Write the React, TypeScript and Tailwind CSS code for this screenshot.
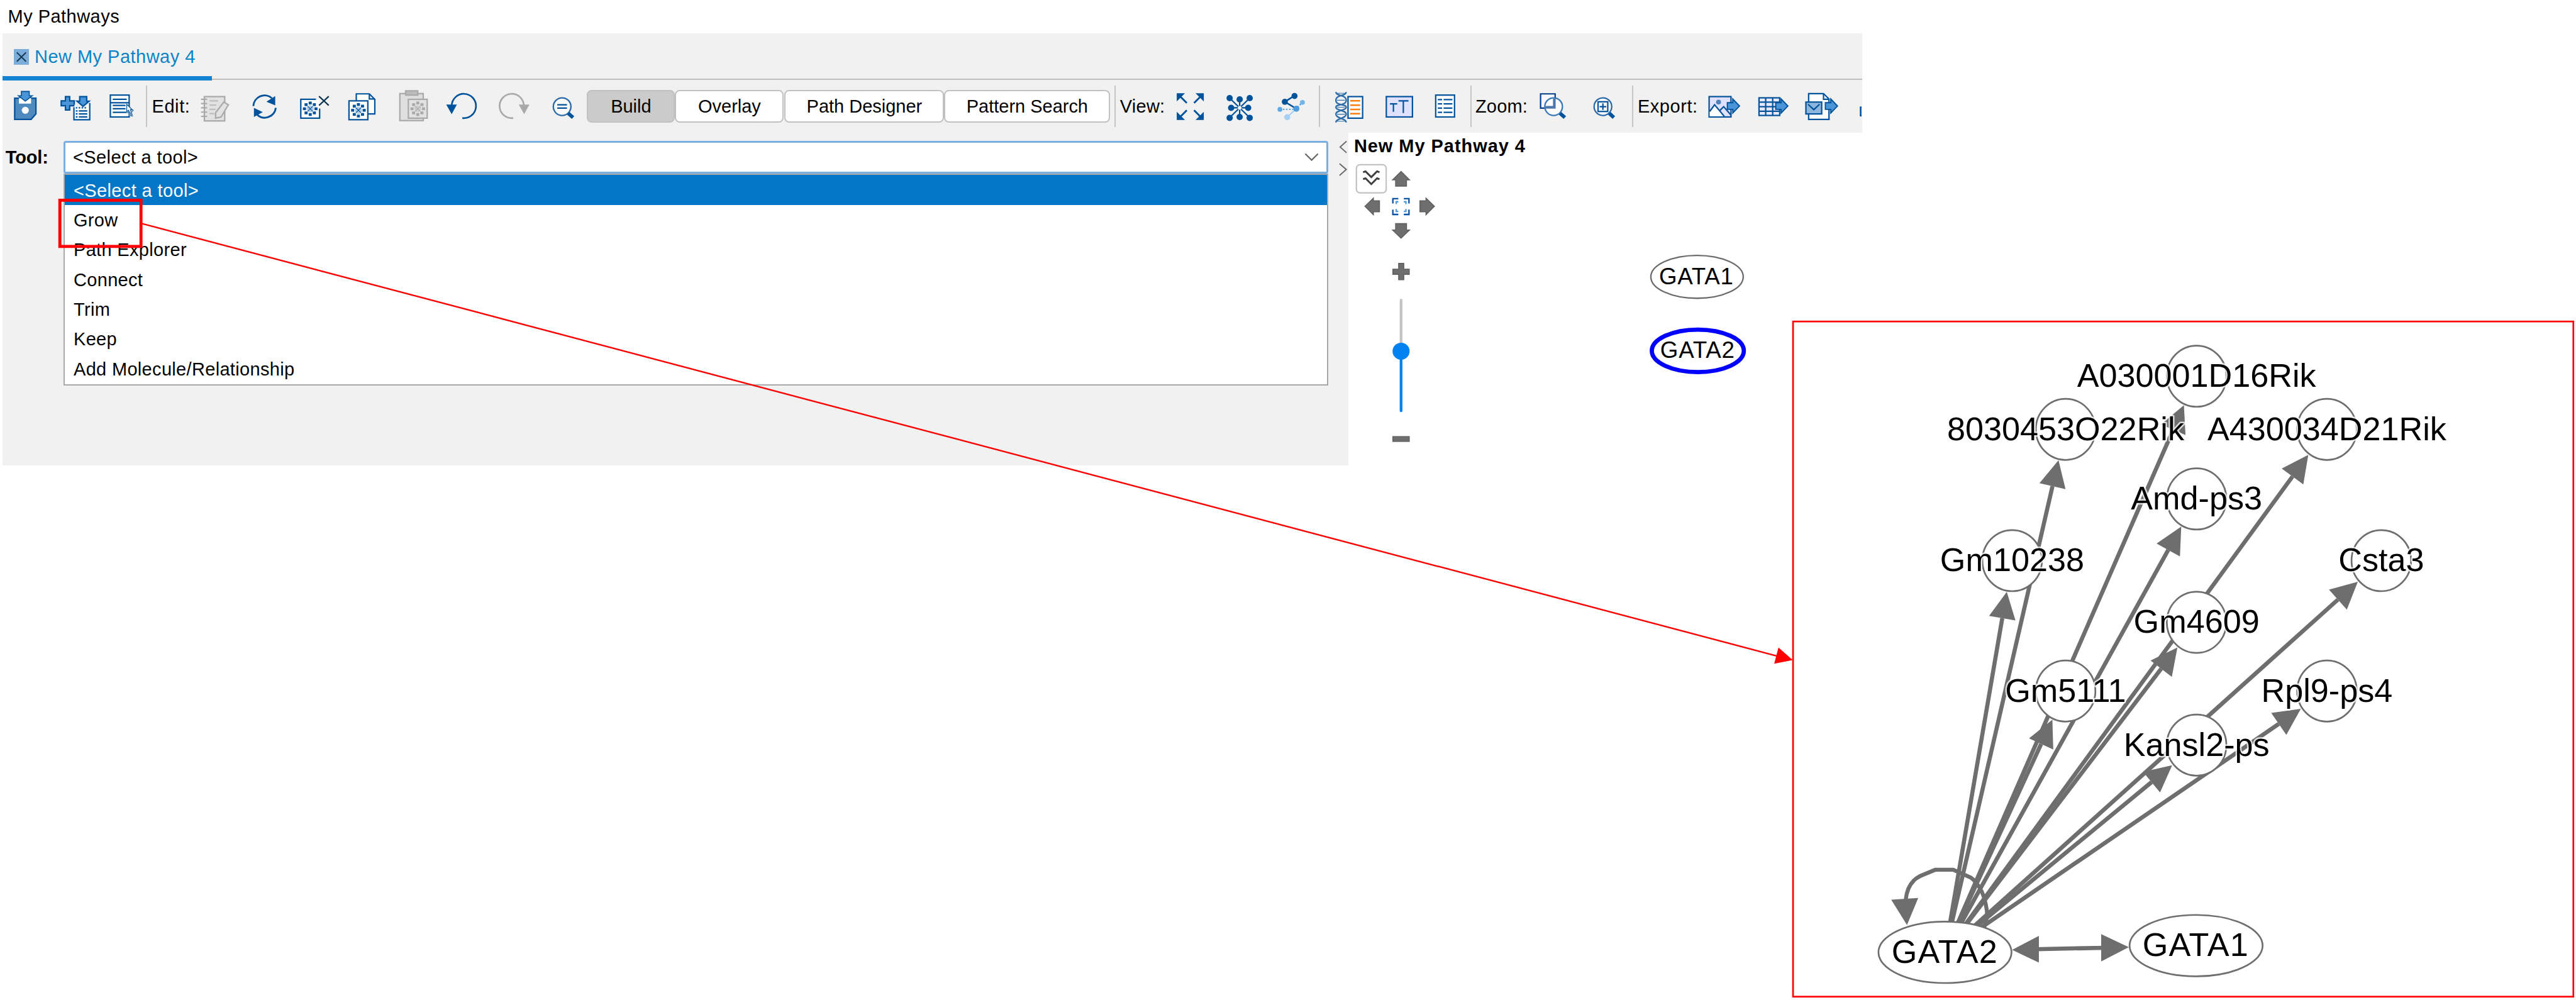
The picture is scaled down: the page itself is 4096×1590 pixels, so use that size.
import React from "react";

const NAVY = "#00529b";
const BLUE = "#4a95d8";
const EDGE = "#6e6e6e";

/* Toolbar cell: a slice of the bar starting at x, w wide, drawn in bar coordinates. */
function Cell({ x, w, children }: { x: number; w: number; children: React.ReactNode }) {
  return (
    <svg
      className="block shrink-0"
      width={w}
      height={86}
      viewBox={`${x} 132 ${w} 86`}
      fill="none"
      stroke={NAVY}
      strokeWidth={2.3}
    >
      {children}
    </svg>
  );
}

function Separator() {
  return <div className="h-[68px] w-[2px] shrink-0 bg-[#c6c6c6]" />;
}

function Dots({ cx, cy, color, core }: { cx: number; cy: number; color: string; core: string }) {
  const pts = [
    [0, -9.5], [0, 9.5], [-9.5, 0], [9.5, 0],
    [-6.8, -6.8], [6.8, -6.8], [-6.8, 6.8], [6.8, 6.8],
  ];
  return (
    <g stroke="none">
      <circle cx={cx} cy={cy} r={6} fill={core} />
      <path d={`M${cx - 4} ${cy - 4}l8 8M${cx + 4} ${cy - 4}l-8 8`} stroke={color} strokeWidth={1.2} />
      {pts.map(([dx, dy], i) => (
        <rect key={i} x={cx + dx - 2.5} y={cy + dy - 2.3} width={5} height={4.6} fill={color} />
      ))}
    </g>
  );
}

function ExportArrow({ x }: { x: number }) {
  return (
    <path d={`M${x} 168.5h9v-6l11 11.5l-11 11.5v-6h-9z`} fill={BLUE} strokeWidth={2} />
  );
}

function ToolButton({ label, className }: { label: string; className: string }) {
  return (
    <button
      className={
        "flex h-[54px] shrink-0 items-center justify-center rounded-[8px] border-3 border-[#c1c1c1] whitespace-nowrap " +
        className
      }
    >
      {label}
    </button>
  );
}

function Toolbar() {
  return (
    <div className="flex h-[86px] w-[3060px] items-center overflow-hidden bg-[#f1f1f1]">
      <Cell x={4} w={76}>
        <path d="M24 161H59V187L51 196H24Z" fill="#4f8abf" />
        <path d="M31 161V170H51V161Z" fill="#fff" stroke="none" />
        <path d="M35 150H48V157H53L41.5 166L30 157H35Z" fill={BLUE} strokeWidth={1.6} />
        <circle cx={41.5} cy={181} r={5.8} fill="#fff" stroke="none" />
      </Cell>
      <Cell x={80} w={85}>
        <path d="M108 158.500H115V165.500H122.500V173.500H115V180.500H108V173.500H101V165.500H108Z" fill={BLUE} />
        <path d="M123 171L121.700 196.500H148V169L141 176H127Z" fill="#fff" stroke="none" />
        <path d="M122 176V196.500H148V169" />
        <path d="M131.500 158.500H143V166H147L137 174.500L127 166H131.500Z" fill={BLUE} />
        <path d="M125 177H143" strokeDasharray="2.500 2.300" />
        <path d="M125 182H128M130 182H144M125 187H128M130 187H144M125 192H128M130 192H144" />
      </Cell>
      <Cell x={165} w={75}>
        <rect x={182} y={156} width={31} height={36} fill="#fff" />
        <path d="M186 163H209M182 168.500H213M186 173H207M186 178.500H207M186 184.500H209" />
        <path d="M209 171L209 183L212 181L216 190L218 189L215 180H218Z" fill="#fff" strokeWidth={1.3} />
        <path d="M209 183L219 191M220 180L212 190" stroke="#5d8fbd" />
      </Cell>
      <Separator />
      <div className="w-[78px] shrink-0 pl-[8px] tracking-[0.600px] whitespace-nowrap">Edit:</div>
      <Cell x={320} w={76}>
        <g stroke="#a9a9a9">
          <rect x={336.500} y={158.500} width={33.500} height={40} fill="#e2e2e2" />
          <path d="M331 163H341M331 170H341M331 177H341M331 184H341M331 191H341" />
          <path d="M345 165.500H359M345 172.500H356M345 179.500H355M345 186.500H353" strokeWidth={2.200} stroke="#bdbdbd" />
          <path d="M368.500 167.500L376 172L364 192L355 194V185Z" fill="#e2e2e2" />
        </g>
      </Cell>
      <Cell x={396} w={78}>
        <path d="M416.500 174A18.500 18.500 0 0 1 447 161" strokeWidth={3} />
        <path d="M453.500 177A18.500 18.500 0 0 1 423 188.500" strokeWidth={3} />
        <path d="M452.500 157.500V173L438 167Z M417.500 192V177L432 184Z" fill={NAVY} stroke="none" />
      </Cell>
      <Cell x={474} w={83}>
        <path d="M495 163H526V194H495Z" fill="#fff" stroke="none" />
        <path d="M520 163H495V194H526V178" />
        <Dots cx={510.500} cy={178.500} color={NAVY} core="#b4cde6" />
        <path d="M525 158L541 173M541 158L525 173" stroke="#0b3450" />
      </Cell>
      <Cell x={557} w={80}>
        <path d="M586.500 165V154H608L617 163V187H605" fill="#fff" />
        <path d="M608 154V162.500H617" />
        <rect x={574.500} y={165.500} width={31} height={31} fill="#fff" />
        <Dots cx={590} cy={181} color={NAVY} core="#b4cde6" />
      </Cell>
      <Cell x={637} w={83}>
        <g stroke="#a9a9a9">
          <rect x={658.500} y={153.500} width={38.500} height={44.500} fill="#dedede" />
          <rect x={668} y={149} width={20} height={7} fill="#bcbcbc" />
          <rect x={672.500} y={163} width={31} height={31} fill="#e2e2e2" />
          <Dots cx={688} cy={178.500} color="#a9a9a9" core="#cfcfcf" />
        </g>
      </Cell>
      <Cell x={720} w={83}>
        <path d="M743 174A20 20 0 1 1 760.500 193.800" strokeWidth={2.800} />
        <path d="M734 171.500H751.500L743 187.500Z" fill={NAVY} stroke="none" />
      </Cell>
      <Cell x={803} w={87}>
        <path d="M862 174A20 20 0 1 0 844.500 193.800" strokeWidth={2.800} stroke="#a9a9a9" />
        <path d="M853.500 171.500H871L862.500 187.500Z" fill="#a9a9a9" stroke="none" />
      </Cell>
      <Cell x={890} w={76}>
        <circle cx={925} cy={175} r={14.500} fill="#fff" fillOpacity={0.6} stroke="#2a6aa8" strokeWidth={2.400} />
        <path d="M917 172H933M917 177.500H933" />
        <path d="M935 186L943 193" strokeWidth={6} />
      </Cell>
      <ToolButton label="Build" className="w-[145px] bg-[#cbcbcb]" />
      <ToolButton label="Overlay" className="w-[179px] bg-white" />
      <ToolButton label="Path Designer" className="ml-px w-[263px] bg-white" />
      <ToolButton label="Pattern Search" className="w-[273px] bg-white" />
      <div className="w-[7px] shrink-0" />
      <Separator />
      <div className="w-[89px] shrink-0 pl-[7px] tracking-[0.300px] whitespace-nowrap">View:</div>
      <Cell x={1925} w={75}>
        <path d="M1940 156L1953 169M1978 156L1965 169M1940 194L1953 181M1978 194L1965 181" strokeWidth={3} />
        <path
          d="M1936.500 153H1950L1936.500 166.500ZM1981 153H1967.500L1981 166.500ZM1936.500 197H1950L1936.500 183.500ZM1981 197H1967.500L1981 183.500Z"
          fill={NAVY}
          stroke="none"
        />
      </Cell>
      <Cell x={2000} w={82}>
        <path d="M2024 161L2057 193M2057 161L2024 193M2040.500 163V192M2026 177H2055" />
        <g fill={NAVY} stroke="none">
          {[[2024, 161], [2057, 161], [2024, 193.500], [2057, 193.500], [2040.500, 163], [2040.500, 192], [2026.500, 177], [2054.500, 177]].map(
            ([cx, cy]) => (
              <circle key={`${cx}-${cy}`} cx={cx} cy={cy} r={5.2} />
            )
          )}
        </g>
        <circle cx={2040.500} cy={177} r={3} fill="#fff" stroke="none" />
      </Cell>
      <Cell x={2082} w={88}>
        <path d="M2130 157L2114 167L2133 178.500" strokeWidth={2.600} />
        <path d="M2111 179.500H2128M2135 176L2143 168" stroke="#5aa5e4" strokeWidth={2.500} strokeDasharray="2.500 2.500" />
        <path d="M2133 178.500L2118 192" stroke="#a8d0f2" />
        <g stroke="none">
          <circle cx={2130} cy={157.500} r={5} fill={NAVY} />
          <circle cx={2114} cy={167} r={5} fill={NAVY} />
          <circle cx={2133} cy={178.500} r={5} fill="#4a9be0" />
          <circle cx={2143} cy={168} r={4} fill="#6fb4ea" />
          <circle cx={2106} cy={179.500} r={4} fill="#62a9e4" />
          <circle cx={2118} cy={192.500} r={5} fill="#a8d0f2" />
        </g>
      </Cell>
      <Separator />
      <Cell x={2172} w={89}>
        <g stroke="#2f6ea8">
          <path d="M2198 151C2198 158 2215 155 2215 164.500S2198 170 2198 176S2215 180 2215 187.500S2198 194 2198 201" strokeWidth={2.400} />
          <path d="M2215 151C2215 158 2198 155 2198 164.500S2215 170 2215 176S2198 180 2198 187.500S2215 194 2215 201" strokeWidth={2.400} />
          <path d="M2199 153H2214M2200 164.500H2213M2200 176H2213M2200 187.500H2213M2199 199H2214" strokeWidth={1.200} />
        </g>
        <rect x={2218} y={158.500} width={24} height={35.500} fill="#fff" />
        <path d="M2221.500 165.500H2238M2221.500 172.500H2238M2221.500 179.500H2238M2221.500 186.500H2238" stroke="#ff7f0e" strokeWidth={2.600} />
      </Cell>
      <Cell x={2261} w={82}>
        <rect x={2281} y={158.500} width={43} height={33.500} fill="#dfe1ff" />
        <path d="M2287 170.500H2299M2292.700 170.500V183.500M2301 165.500H2317.500M2309 165.500V185.500" />
      </Cell>
      <Cell x={2343} w={77}>
        <rect x={2362.500} y={156} width={31} height={36} fill="#fff" />
        <path d="M2366 163.500H2373M2375.500 163.500H2390M2366 170.500H2373M2375.500 170.500H2390M2366 177.500H2373M2375.500 177.500H2390M2366 184.500H2373M2375.500 184.500H2390" />
      </Cell>
      <Separator />
      <div className="w-[101px] shrink-0 pl-[6px] tracking-[0.200px] whitespace-nowrap">Zoom:</div>
      <Cell x={2523} w={77}>
        <path d="M2535 154H2559V177.500H2535Z" stroke="#003f87" fill="#f8f8ff" />
        <circle cx={2556.500} cy={175} r={14.500} fill="#fff" fillOpacity={0.7} stroke="#3a79b4" strokeWidth={2.400} />
        <path d="M2543 176H2557.500V162" stroke="#4c76ac" strokeWidth={4} />
        <path d="M2567 186L2575 193" strokeWidth={6} />
      </Cell>
      <Cell x={2600} w={86}>
        <circle cx={2638} cy={175} r={14.500} fill="#fff" stroke="#2a6aa8" strokeWidth={2.400} />
        <rect x={2630} y={167} width={16} height={16} />
        <path d="M2632.500 175H2643.500M2638 169.500V180.500" />
        <path d="M2648.500 186L2656 193" strokeWidth={6} />
      </Cell>
      <Separator />
      <div className="w-[113px] shrink-0 pl-[7px] tracking-[0.600px] whitespace-nowrap">Export:</div>
      <Cell x={2801} w={77}>
        <rect x={2813} y={158.500} width={36} height={33.500} fill="#dfe1ff" />
        <path d="M2814 183L2822 172L2837 191H2814Z" fill="#fff" stroke="none" />
        <path d="M2814 183L2822 172L2838 191M2831 181L2837 175L2849 189" />
        <circle cx={2828.500} cy={167.500} r={4} fill="#4f83b8" stroke="none" />
        <ExportArrow x={2843} />
      </Cell>
      <Cell x={2878} w={79}>
        <rect x={2894.500} y={160.500} width={34} height={29} fill="#e9eaff" />
        <path d="M2905.500 160V190M2917 160V190M2894 167.500H2929M2894 175H2929M2894 182.500H2929" />
        <ExportArrow x={2922} />
      </Cell>
      <Cell x={2957} w={86}>
        <path d="M2976.500 153.500H3001L3010 162.500V196H2976.500Z" fill="#fff" />
        <path d="M3001 154V163H3010" />
        <rect x={2972} y={167.500} width={26} height={19.500} fill="#8fb6dc" />
        <path d="M2975.500 171L2985 180L2994.500 171" />
        <ExportArrow x={3004} />
      </Cell>
      <Cell x={3043} w={21}>
        <rect x={3062} y={176} width={8} height={14} fill="#4f8abf" />
      </Cell>
    </div>
  );
}

const TOOLS = ["Grow", "Path Explorer", "Connect", "Trim", "Keep", "Add Molecule/Relationship"];

function ToolPanel() {
  return (
    <div className="flex h-[548px] w-[2215px] shrink-0 bg-[#f1f1f1] pt-[14px]">
      <div className="flex h-[54px] w-[101px] shrink-0 items-center pl-[5px] font-bold tracking-[-0.100px]">Tool:</div>
      <div className="w-[2081px] shrink-0">
        <div className="flex h-[54px] items-center justify-between rounded-[4px] border-4 border-[#79afe3] bg-white pr-[13px] pl-[12px]">
          <span className="tracking-[0.400px]">&lt;Select a tool&gt;</span>
          <svg width={24} height={14} viewBox="0 0 24 14" fill="none" stroke="#666" strokeWidth={2.3}>
            <path d="M1.500 1.500L12 12L22.500 1.500" />
          </svg>
        </div>
        <ul className="h-[348px] border-3 border-[#a9a9a9] bg-white">
          <li className="flex h-[49px] items-center bg-[#0277c7] pt-[2px] pl-[14px] tracking-[0.400px] text-white">&lt;Select a tool&gt;</li>
          {TOOLS.map((t) => (
            <li key={t} className="flex h-[49px] items-center pt-[2px] pl-[14px] tracking-[0.350px]">
              {t}
            </li>
          ))}
        </ul>
      </div>
      <svg className="ml-[17px]" width={14} height={64} viewBox="0 0 14 64" fill="none" stroke="#6a6a6a" strokeWidth={2}>
        <path d="M12.500 0.500L2 10L12.500 19.500M1 37.500L12 47L1 57" />
      </svg>
    </div>
  );
}

function Navigator() {
  return (
    <svg className="block" width={160} height={470} viewBox="2225 264 160 470" fill="#6e6e6e" stroke="#5f5f5f" strokeWidth={1.500}>
      <rect x={2232} y={271} width={49} height={46.500} rx={6} fill="#fff" stroke="#c3c3c3" strokeWidth={2.3} />
      <path d="M2243 283.500L2247 282L2256.500 291.500L2266 282L2270 283.500M2243 295L2247 293.500L2256.500 303L2266 293.500L2270 295" fill="none" stroke="#3f3f3f" strokeWidth={3} />
      <path d="M2305.500 282L2319.500 296H2314.500V306.500H2296.500V296H2291.500Z" />
      <path d="M2305.500 392L2319.500 378.500H2314.500V368H2296.500V378.500H2291.500Z" />
      <path d="M2246 339.500L2260 326V330.500H2270V348.500H2260V353.500Z" />
      <path d="M2360.500 339.500L2346.500 326V330.500H2336.500V348.500H2346.500V353.500Z" />
      <g fill="none" stroke="#0a52a5" strokeWidth={2.4}>
        <path d="M2292 335V327H2301M2310 327H2318.500V335M2318.500 345V353H2310M2301 353H2292V345" />
        <path d="M2297.500 336V332H2301M2310 332H2313.500V336M2313.500 344V348H2310M2301 348H2297.500V344" stroke="#4e9fe0" />
      </g>
      <path d="M2301.500 433.500H2310V443H2319V451.500H2310V460.500H2301.500V451.500H2292V443H2301.500Z" />
      <path d="M2305.500 494V578" stroke="#c4c4c4" strokeWidth={4.500} strokeLinecap="round" />
      <path d="M2305.500 578V676" stroke="#0082f0" strokeWidth={4.500} strokeLinecap="round" />
      <circle cx={2305.500} cy={578} r={14} fill="#0082f0" stroke="none" />
      <rect x={2292} y={718.500} width={27} height={8} />
    </svg>
  );
}

const HUB = { x: 3200.5, y: 1567 };
const GENES = [
  { name: "A030001D16Rik", x: 3614.5, y: 619 },
  { name: "8030453O22Rik", x: 3399, y: 706.5 },
  { name: "A430034D21Rik", x: 3829, y: 706.5 },
  { name: "Amd-ps3", x: 3614.5, y: 821 },
  { name: "Gm10238", x: 3311, y: 922.5 },
  { name: "Csta3", x: 3918.5, y: 922.5 },
  { name: "Gm4609", x: 3614.5, y: 1024 },
  { name: "Gm5111", x: 3399, y: 1137 },
  { name: "Rpl9-ps4", x: 3829, y: 1137 },
  { name: "Kansl2-ps", x: 3614.5, y: 1226 },
];

function GeneEdge({ x, y }: { x: number; y: number }) {
  const len = Math.hypot(x - HUB.x, y - HUB.y);
  const ux = (x - HUB.x) / len;
  const uy = (y - HUB.y) / len;
  const tx = x - ux * 52;
  const ty = y - uy * 52;
  const bx = tx - ux * 44;
  const by = ty - uy * 44;
  return (
    <g>
      <line x1={HUB.x} y1={HUB.y} x2={bx} y2={by} stroke={EDGE} strokeWidth={6.8} />
      <polygon
        points={`${tx},${ty} ${bx - uy * 22},${by + ux * 22} ${bx + uy * 22},${by - ux * 22}`}
        fill={EDGE}
      />
    </g>
  );
}

interface LabelProps {
  x: number;
  y: number;
  size: number;
  spacing?: number;
  children: string;
}

function Label({ x, y, size, spacing = 0, children }: LabelProps) {
  return (
    <text
      x={x + spacing / 2}
      y={y}
      fontSize={size}
      letterSpacing={spacing}
      textAnchor="middle"
      fill="#000"
      stroke="#fff"
      strokeOpacity={0.75}
      strokeWidth={5}
      strokeLinejoin="round"
      paintOrder="stroke"
    >
      {children}
    </text>
  );
}

function Diagram() {
  return (
    <svg className="pointer-events-none absolute top-0 left-0" width={4239} height={1645} viewBox="0 0 4239 1645" fill="none">
      <ellipse cx={2792.5} cy={455.5} rx={76} ry={35.3} fill="#fff" stroke="#6b6b6b" strokeWidth={2.4} />
      <ellipse cx={2793.8} cy={577.3} rx={75.7} ry={35} fill="#fff" stroke="#0000ff" strokeWidth={7} />
      <Label x={2791} y={468} size={38} spacing={0.8}>GATA1</Label>
      <Label x={2793} y={589.3} size={38} spacing={0.8}>GATA2</Label>

      <rect x={2950.5} y={529} width={1284} height={1111} fill="#fff" stroke="#ff0000" strokeWidth={2.8} />

      {GENES.map((g) => (
        <GeneEdge key={g.name} x={g.x} y={g.y} />
      ))}
      <path
        d="M3136 1480C3137.500 1465 3142 1456 3149 1449C3154 1444 3160 1441 3165.500 1439L3185 1431H3214L3243 1444C3252 1450 3257 1459 3261 1467C3266 1478 3270 1495 3270 1508L3264 1530"
        stroke={EDGE}
        strokeWidth={6.5}
        strokeLinejoin="round"
      />
      <path d="M3138 1522L3112 1480.500L3156.500 1477.500Z" fill={EDGE} />
      <path d="M3350 1561.800L3465 1559.500" stroke={EDGE} strokeWidth={6.8} />
      <path d="M3311 1563L3355 1540V1584ZM3503 1558.500L3457.500 1537V1582Z" fill={EDGE} />
      <ellipse cx={HUB.x} cy={HUB.y} rx={109.5} ry={50.5} fill="#fff" stroke={EDGE} strokeWidth={2.8} />
      <ellipse cx={3613.7} cy={1556} rx={109.5} ry={50.5} fill="#fff" stroke={EDGE} strokeWidth={2.8} />
      {GENES.map((g) => (
        <ellipse key={g.name} cx={g.x} cy={g.y} rx={49} ry={50.3} fill="#fff" stroke={EDGE} strokeWidth={2.8} />
      ))}
      {GENES.map((g) => (
        <Label key={g.name} x={g.x} y={g.y + 17.5} size={54}>
          {g.name}
        </Label>
      ))}
      <Label x={HUB.x - 1} y={1584} size={54} spacing={1.2}>GATA2</Label>
      <Label x={3612.5} y={1573.5} size={54} spacing={1.2}>GATA1</Label>

      <rect x={98.500} y={329.500} width={133.500} height={76} stroke="#ff0000" strokeWidth={5} />
      <path d="M234 368L2930 1081" stroke="#ff0000" strokeWidth={2.500} />
      <path d="M2950 1086L2919.500 1092L2926.500 1065.500Z" fill="#ff0000" />
    </svg>
  );
}

export default function App() {
  return (
    <div className="h-[1590px] w-[4096px] overflow-hidden bg-white">
      <div className="relative h-[1646px] w-[4239px] bg-white font-['Liberation_Sans',Arial,sans-serif] text-[30px] leading-[40px] text-black [zoom:0.9663]">
        <header className="flex h-[55px] items-center pl-[13px] tracking-[0.500px]">My Pathways</header>
        <div className="ml-[4px]">
          <div className="flex h-[77px] w-[3060px] items-end bg-[#f1f1f1]">
            <div className="flex h-[77px] w-[345px] items-center gap-[9px] border-b-8 border-[#1583d3] pt-[7px] pl-[19px] text-[#0a84c8]">
              <svg width={25} height={26} viewBox="0 0 25 26" className="shrink-0">
                <rect width={25} height={26} fill="#7badda" />
                <path d="M5 5.500L20 20.500M20 5.500L5 20.500" stroke="#0f3450" strokeWidth={2} />
              </svg>
              <span className="tracking-[0.500px] whitespace-nowrap">New My Pathway 4</span>
            </div>
            <div className="mb-px h-[2px] grow bg-[#bebebe]" />
          </div>
          <Toolbar />
          <div className="flex">
            <ToolPanel />
            <section className="pl-[6px]">
              <h1 className="h-[46px] pt-[2px] pl-[3px] font-bold tracking-[1px] whitespace-nowrap">New My Pathway 4</h1>
              <Navigator />
            </section>
          </div>
        </div>
        <Diagram />
      </div>
    </div>
  );
}
